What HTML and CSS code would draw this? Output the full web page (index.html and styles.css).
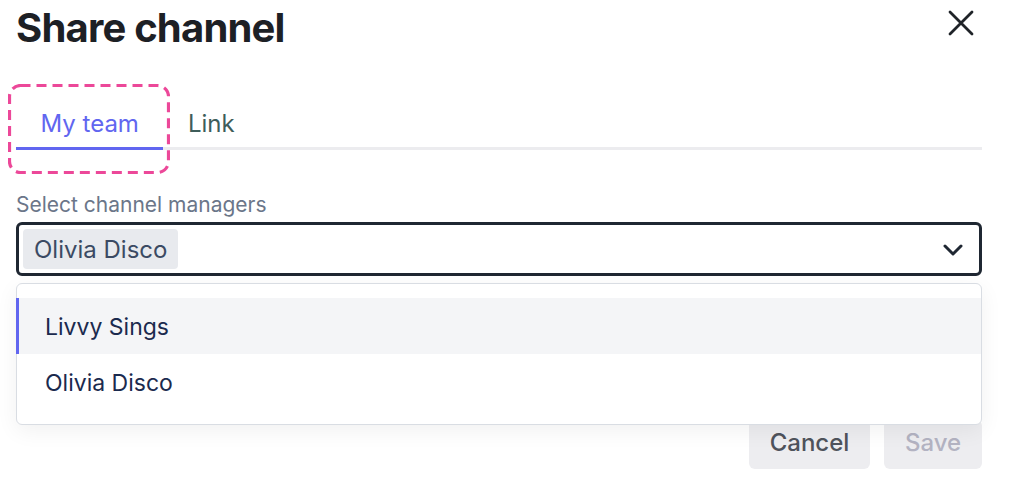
FILE: index.html
```html
<!DOCTYPE html>
<html lang="en">
<head>
<meta charset="utf-8">
<title>Share channel</title>
<link rel="stylesheet" href="styles.css">
</head>
<body>
<div class="dialog">
  <header class="head">
    <h1 class="title">Share channel</h1>
    <button class="close" aria-label="Close">
      <svg width="26" height="26" viewBox="0 0 26 26"><path d="M2 2 L24 24 M24 2 L2 24" stroke="#1f2328" stroke-width="2.8" stroke-linecap="round" fill="none"/></svg>
    </button>
  </header>
  <nav class="tabs">
    <div class="tab active">My team<svg class="highlight" width="162" height="90" viewBox="0 0 162 90"><rect x="1.5" y="1.5" width="159" height="87" rx="11" ry="11" fill="none" stroke="#ec4899" stroke-width="3.2" stroke-dasharray="10 6"/></svg></div>
    <div class="tab">Link</div>
  </nav>
  <div class="label">Select channel managers</div>
  <div class="select-wrap">
    <div class="select">
      <span class="chip">Olivia Disco</span>
      <svg class="chev" width="20" height="12" viewBox="0 0 20 12"><path d="M2 2 L10 10 L18 2" stroke="#1f2732" stroke-width="3" stroke-linecap="round" stroke-linejoin="round" fill="none"/></svg>
    </div>
    <ul class="menu">
      <li class="opt current">Livvy Sings</li>
      <li class="opt">Olivia Disco</li>
    </ul>
  </div>
  <footer class="foot">
    <button class="btn cancel">Cancel</button>
    <button class="btn save">Save</button>
  </footer>
</div>
</body>
</html>
```
FILE: styles.css
```css
* { box-sizing: border-box; }
html, body { margin: 0; background: #fff; }
body {
  font-family: Inter, "Noto Sans", "Liberation Sans", sans-serif;
  width: 1019px;
  height: 493px;
  overflow: hidden;
}
.dialog {
  padding: 3px 37px 0 16px;
}
.head {
  display: flex;
  justify-content: space-between;
  align-items: flex-start;
}
.title {
  margin: 0;
  font-size: 40px;
  line-height: 50px;
  font-weight: 700;
  color: #1d2025;
  letter-spacing: -0.8px;
}
.close {
  border: 0;
  background: none;
  padding: 0;
  margin: 7px 8px 0 0;
  width: 26px;
  height: 26px;
  display: flex;
}
.tabs {
  display: flex;
  margin-top: 39px;
  border-bottom: 3px solid #ececef;
}
.tab {
  position: relative;
  padding: 19px 24.5px 10px;
  font-size: 24px;
  line-height: 26px;
  color: #3e5d5a;
  margin-bottom: -3px;
  border-bottom: 3px solid transparent;
}
.tab.active {
  color: #6166f0;
  border-bottom-color: #6166f0;
}
.highlight {
  position: absolute;
  left: -8px;
  top: -8px;
}
.label {
  margin-top: 44px;
  font-size: 21px;
  line-height: 22px;
  color: #6b7689;
}
.select-wrap {
  position: relative;
  margin-top: 6px;
}
.select {
  height: 54px;
  border: 3px solid #1f2732;
  border-radius: 6px;
  padding: 4px 16px 4px 4px;
  display: flex;
  align-items: center;
  justify-content: space-between;
}
.chip {
  height: 40px;
  display: flex;
  align-items: center;
  padding: 0 11px;
  background: #e8eaee;
  border-radius: 4px;
  font-size: 24px;
  color: #3b4a63;
}
.chev { margin-top: 2px; }
.menu {
  position: absolute;
  left: 0;
  right: 0;
  top: calc(100% + 7px);
  margin: 0;
  padding: 14px 0;
  list-style: none;
  background: #fff;
  border: 1px solid #d9dde3;
  border-radius: 6px;
  box-shadow: 0 6px 22px rgba(0, 0, 0, 0.06);
  z-index: 2;
}
.opt {
  height: 56px;
  display: flex;
  align-items: center;
  padding: 2px 0 0 26px;
  font-size: 23px;
  color: #1b2a4e;
  border-left: 3px solid transparent;
  margin-left: -1px;
}
.opt.current {
  background: #f4f5f7;
  border-left-color: #6166f0;
}
.foot {
  display: flex;
  justify-content: flex-end;
  gap: 14px;
  margin-top: 144px;
}
.btn {
  height: 49px;
  border: 0;
  border-radius: 6px;
  background: #ededf0;
  font-family: inherit;
  font-size: 24px;
  font-weight: 500;
  padding: 0 0 4px;
}
.cancel { color: #4f535c; width: 121px; }
.save { color: #b3b3c2; width: 98px; }
```
